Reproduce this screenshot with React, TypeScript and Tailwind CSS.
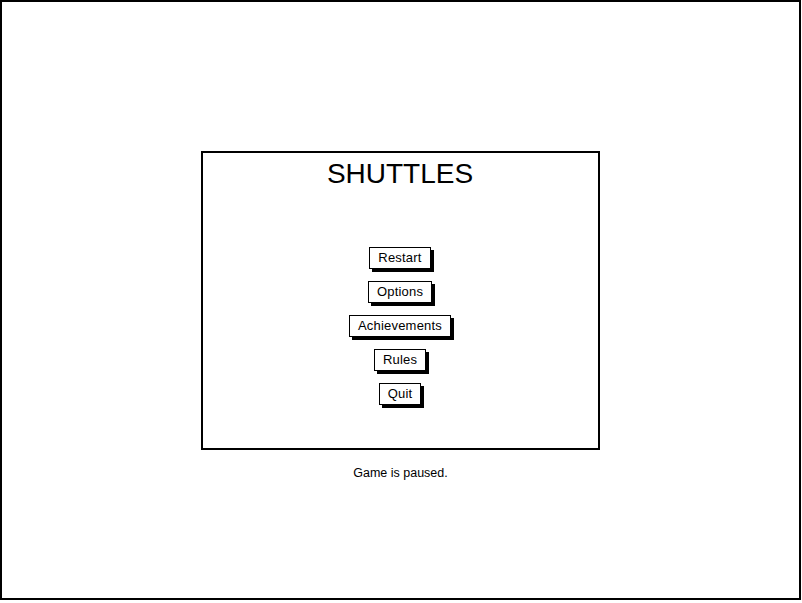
import React from "react";

const font = { fontFamily: '"Liberation Sans", Arial, sans-serif' };

function Btn({ label }: { label: string }) {
  return (
    <div className="border border-black bg-white px-2 h-[22px] flex items-center text-[13px] tracking-[0.2px] text-black shadow-[3px_3px_0_#000]">
      {label}
    </div>
  );
}

export default function App() {
  return (
    <div className="w-[802px] h-[603px] bg-white" style={font}>
      <div className="w-[801px] h-[600px] border-2 border-black flex flex-col items-center pt-[149px]">
        <div className="w-[399px] h-[299px] border-2 border-black flex flex-col items-center -ml-[1px]">
          <div className="mt-[5px] text-[28px] leading-[32px] text-black">SHUTTLES</div>
          <div className="mt-[57px] flex flex-col items-center gap-[12px]">
            <Btn label="Restart" />
            <Btn label="Options" />
            <Btn label="Achievements" />
            <Btn label="Rules" />
            <Btn label="Quit" />
          </div>
        </div>
        <div className="mt-[14px] text-[12.5px] text-black">Game is paused.</div>
      </div>
    </div>
  );
}
